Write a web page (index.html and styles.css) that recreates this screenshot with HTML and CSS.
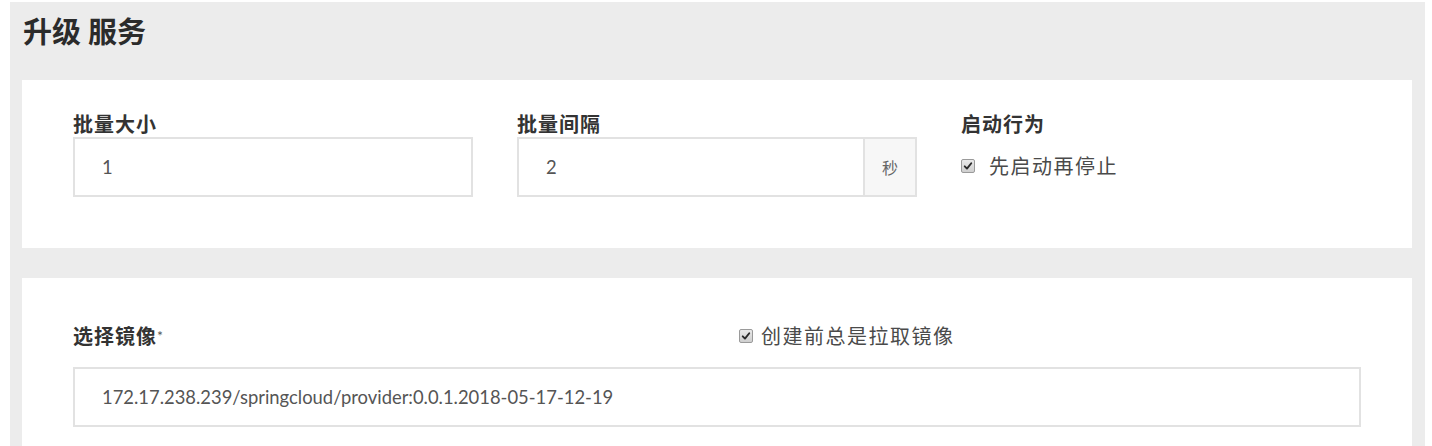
FILE: index.html
```html
<!DOCTYPE html>
<html lang="zh-CN">
<head>
<meta charset="utf-8">
<title>升级 服务</title>
<link rel="stylesheet" href="styles.css">
</head>
<body>
<div class="page">
  <h1 class="page-title">升级 服务</h1>

  <section class="card card-top">
    <div class="row row-3">
      <div class="col">
        <div class="field-label">批量大小</div>
        <input class="text-input" type="text" value="1">
      </div>
      <div class="col">
        <div class="field-label">批量间隔</div>
        <div class="input-group">
          <input class="text-input grouped" type="text" value="2">
          <span class="addon">秒</span>
        </div>
      </div>
      <div class="col">
        <div class="field-label">启动行为</div>
        <label class="check-row">
          <span class="fake-check"><svg viewBox="0 0 14 14" width="14" height="14"><path d="M3.2 7.4 L5.8 10 L10.8 3.8" fill="none" stroke="#2b2b2b" stroke-width="2.2" stroke-linecap="round" stroke-linejoin="round"/></svg></span>
          <span class="check-text">先启动再停止</span>
        </label>
      </div>
    </div>
  </section>

  <section class="card card-image">
    <div class="row row-2">
      <div class="col">
        <div class="field-label">选择镜像<span class="req">*</span></div>
      </div>
      <div class="col">
        <label class="check-row check-inline">
          <span class="fake-check"><svg viewBox="0 0 14 14" width="14" height="14"><path d="M3.2 7.4 L5.8 10 L10.8 3.8" fill="none" stroke="#2b2b2b" stroke-width="2.2" stroke-linecap="round" stroke-linejoin="round"/></svg></span>
          <span class="check-text">创建前总是拉取镜像</span>
        </label>
      </div>
    </div>
    <div class="row row-1">
      <div class="col">
        <input class="text-input" type="text" value="172.17.238.239/springcloud/provider:0.0.1.2018-05-17-12-19">
      </div>
    </div>
  </section>
</div>
</body>
</html>
```

FILE: styles.css
```css
* {
  box-sizing: border-box;
}

html, body {
  margin: 0;
  padding: 0;
  background: #ffffff;
  height: 446px;
  overflow: hidden;
}

body {
  font-family: Lato, "Noto Sans CJK SC", sans-serif;
  color: #333333;
}

.page {
  margin: 2px 7px 0 10px;
  padding: 0 13px 0 12px;
  background: #ececec;
  min-height: 444px;
}

.page-title {
  margin: 0;
  padding: 10px 0 28px 1px;
  font-size: 29px;
  line-height: 40px;
  font-weight: bold;
  color: #2b2b2b;
}

.card {
  background: #ffffff;
  padding: 0 29px;
}

.card-top {
  padding-top: 31px;
  padding-bottom: 51px;
  margin-bottom: 30px;
}

.card-image {
  padding-top: 45px;
  padding-bottom: 40px;
}

.row {
  display: grid;
}

.row-3 {
  grid-template-columns: repeat(3, 1fr);
}

.row-2 {
  grid-template-columns: repeat(2, 1fr);
}

.row-1 {
  grid-template-columns: 1fr;
  margin-top: 18px;
}

.col {
  padding: 0 22px;
  min-width: 0;
}

.field-label {
  font-size: 20px;
  line-height: 26px;
  font-weight: bold;
  letter-spacing: 1px;
  color: #333333;
}

.req {
  font-size: 14px;
  font-weight: normal;
  vertical-align: top;
  letter-spacing: 0;
  color: #555;
}

.text-input {
  display: block;
  width: 100%;
  height: 60px;
  margin: 0;
  border: 2px solid #e2e2e2;
  border-radius: 0;
  padding: 0 0 0 27px;
  font-family: Lato, "Noto Sans CJK SC", sans-serif;
  font-size: 18.4px;
  color: #555555;
  background: #ffffff;
  outline: none;
}

.input-group {
  display: flex;
}

.text-input.grouped {
  flex: 1;
  width: auto;
  min-width: 0;
}

.addon {
  display: flex;
  align-items: center;
  justify-content: center;
  width: 52px;
  height: 60px;
  border: 2px solid #e2e2e2;
  border-left: 0;
  background: #f7f7f7;
  font-size: 16px;
  color: #666666;
}

.check-row {
  display: flex;
  align-items: center;
  gap: 14px;
  margin-top: 14px;
  height: 30px;
}

.check-inline {
  margin-top: 0;
  height: 26px;
  gap: 8px;
}

.fake-check {
  display: inline-flex;
  align-items: center;
  justify-content: center;
  width: 14px;
  height: 14px;
  flex: none;
  border: 1px solid #9a9a9a;
  border-radius: 2px;
  background: linear-gradient(#e9e9e9, #cfcfcf);
}

.fake-check svg {
  display: block;
  width: 12px;
  height: 12px;
}

.check-text {
  font-size: 20px;
  letter-spacing: 1.5px;
  color: #4a4a4a;
  line-height: 26px;
}
```
